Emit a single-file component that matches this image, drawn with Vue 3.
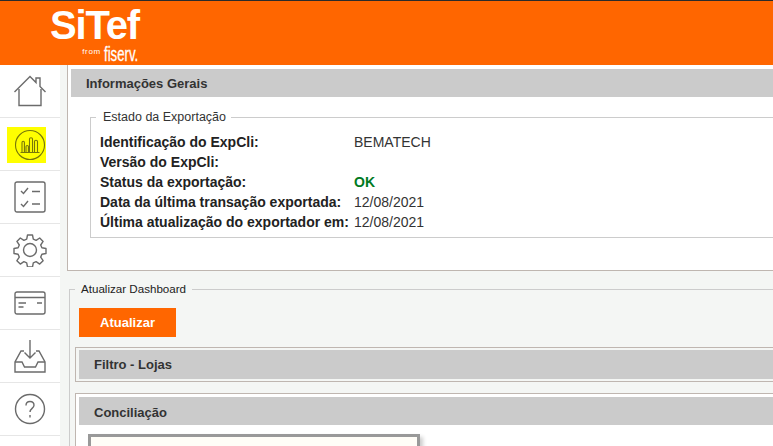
<script setup>
const sideItems = ['home', 'chart', 'tasks', 'gear', 'card', 'inbox', 'help']
const rows = [
  { label: 'Identificação do ExpCli:', value: 'BEMATECH' },
  { label: 'Versão do ExpCli:', value: '' },
  { label: 'Status da exportação:', value: 'OK', ok: true },
  { label: 'Data da última transação exportada:', value: '12/08/2021' },
  { label: 'Última atualização do exportador em:', value: '12/08/2021' },
]
</script>

<template>
  <div class="page">
    <header class="topbar">
      <div class="logo">
        <div class="logo-name">SiTef</div>
        <div class="logo-sub"><span class="from">from</span><span class="fiserv">fiserv.</span></div>
      </div>
    </header>
    <div class="body">
      <nav class="sidebar">
        <div v-for="item in sideItems" :key="item" class="side-item">
          <svg v-if="item === 'home'" width="34" height="34" viewBox="0 0 34 34" fill="none" stroke="#6b6b6b" stroke-width="1.4">
            <path d="M1.500 18 17 2.500 23 8.500V4h4v8.500l5.500 5.500" />
            <path d="M6 15v16.500h22V15" />
          </svg>
          <span v-else-if="item === 'chart'" class="marker">
            <svg width="32" height="32" viewBox="0 0 32 32" fill="none" stroke="#77770a" stroke-width="1.100">
              <circle cx="16" cy="16" r="14.500" />
              <path d="M6.500 23.500h19M8 23v-9.500c0-1.600 2.400-1.600 2.400 0V23M12 23v-5.500c0-1.400 2.400-1.400 2.400 0V23M15.500 23V10c0-1.600 3-1.600 3 0v13M20.500 23v-10.500c0-1.600 3-1.600 3 0V23" />
            </svg>
          </span>
          <svg v-else-if="item === 'tasks'" width="32" height="32" viewBox="0 0 32 32" fill="none" stroke="#6b6b6b" stroke-width="1.400">
            <rect x="1" y="1" width="30" height="30" rx="2" />
            <path d="M7 10l2.500 2.500L14 7M18 10.500h8M7 23l2.500 2.500L14 20M18 23h8" />
          </svg>
          <svg v-else-if="item === 'gear'" width="34" height="34" viewBox="0 0 34 34" fill="none" stroke="#6b6b6b" stroke-width="1.400" stroke-linejoin="round">
            <circle cx="17" cy="17" r="6.500" />
            <path d="M14.500 2h5l.8 4.200 2.800 1.200 3.600-2.400 3.400 3.400-2.400 3.600 1.200 2.800 4.100.7v5l-4.100.8-1.200 2.800 2.400 3.600-3.400 3.400-3.600-2.400-2.800 1.200-.8 4.100h-5l-.8-4.100-2.800-1.200-3.600 2.400-3.400-3.400 2.400-3.600-1.200-2.800-4.100-.8v-5l4.100-.7 1.200-2.800-2.400-3.600 3.400-3.400 3.600 2.400 2.800-1.200z" />
          </svg>
          <svg v-else-if="item === 'card'" width="32" height="24" viewBox="0 0 32 24" fill="none" stroke="#6b6b6b" stroke-width="1.400">
            <rect x="1" y="1" width="30" height="22" rx="2" />
            <path d="M1 6.500h30M4.500 12h7.500M4.500 16h5M23 12h5" />
          </svg>
          <svg v-else-if="item === 'inbox'" width="32" height="34" viewBox="0 0 32 34" fill="none" stroke="#6b6b6b" stroke-width="1.400">
            <path d="M16 1v18M10.500 13.500 16 19l5.500-5.500" />
            <path d="M10 12H7L1 23v10h30V23L25 12h-3" />
            <path d="M1 23h7l2.500 5h11l2.500-5h7" />
          </svg>
          <svg v-else width="32" height="32" viewBox="0 0 32 32" fill="none" stroke="#6b6b6b" stroke-width="1.400">
            <circle cx="16" cy="16" r="14.500" />
            <path d="M12 12.500c0-2.500 1.800-4 4-4s4 1.500 4 3.800c0 3-4 3.200-4 6.700" />
            <path d="M16 22v2.500" />
          </svg>
        </div>
      </nav>
      <main class="content">
        <section class="panel">
          <h2 class="panel-title main-title">Informações Gerais</h2>
          <fieldset class="status-box">
            <legend>Estado da Exportação</legend>
            <div class="status-grid">
              <template v-for="row in rows" :key="row.label">
                <span class="label">{{ row.label }}</span>
                <span class="value" :class="{ ok: row.ok }">{{ row.value }}</span>
              </template>
            </div>
          </fieldset>
        </section>
        <fieldset class="dash-box">
          <legend>Atualizar Dashboard</legend>
          <button class="update-btn">Atualizar</button>
          <section class="sub-panel">
            <h2 class="panel-title">Filtro - Lojas</h2>
          </section>
          <section class="sub-panel last">
            <h2 class="panel-title">Conciliação</h2>
            <div class="sub-body"><div class="chart-box"></div></div>
          </section>
        </fieldset>
      </main>
    </div>
  </div>
</template>

<style>
html, body {
  margin: 0;
  height: 100%;
  overflow: hidden;
  background: #f4f6f4;
}
</style>

<style scoped>
.page {
  width: 773px;
  height: 446px;
  overflow: hidden;
  font-family: "Liberation Sans", Arial, sans-serif;
  background: #f4f6f4;
}
.topbar {
  height: 64px;
  background: #ff6600;
  border-top: 1px solid #2b2b2b;
  padding-left: 50px;
  overflow: hidden;
}
.logo {
  width: 90px;
  color: #fff;
}
.logo-name {
  font-size: 40px;
  line-height: 38px;
  font-weight: 700;
  letter-spacing: -1.200px;
  margin-top: 5px;
}
.logo-sub {
  display: flex;
  justify-content: flex-end;
  align-items: baseline;
  line-height: 18px;
  height: 19px;
  margin-top: 1px;
}
.from {
  align-self: flex-start;
  font-size: 8px;
  letter-spacing: 0.7px;
  line-height: 12px;
  margin-top: 1px;
  margin-right: 3px;
}
.fiserv {
  width: 36px;
  font-size: 20px;
  white-space: nowrap;
  transform: scaleX(0.66);
  transform-origin: left;
  -webkit-text-stroke: 0.3px #fff;
}
.body {
  display: flex;
}
.sidebar {
  width: 60px;
  flex: none;
  background: #fff;
  height: 381px;
}
.side-item {
  height: 52px;
  border-bottom: 1px solid #e6e6e6;
  display: flex;
  align-items: center;
  justify-content: center;
}
.marker {
  display: flex;
  background: #ffff00;
  width: 39px;
  height: 36px;
  margin-right: 7px;
  margin-top: 1px;
  align-items: center;
  justify-content: flex-end;
}
.content {
  flex: 1;
  min-width: 0;
  padding-left: 7px;
}
.panel {
  height: 206px;
  background: #fff;
  border: 1px solid #bfb6b0;
  border-width: 0 0 1px 1px;
  padding: 4px 0 0 3px;
  box-sizing: border-box;
  width: 720px;
}
.panel-title {
  margin: 0;
  background: #cbcbcb;
  font-size: 13px;
  font-weight: 700;
  color: #333;
  height: 28px;
  line-height: 28px;
  padding-left: 15px;
}
.main-title {
  line-height: 30px;
}
.status-box {
  margin: 13px 0 0 19px;
  padding: 8px 0 5px 9px;
  border: 1px solid #cccccc;
  border-right: 0;
  min-width: 0;
}
.status-box legend {
  font-size: 12.500px;
  color: #333;
  margin-left: -4px;
  padding: 0 5px 0 7px;
  line-height: 14px;
}
.status-grid {
  display: grid;
  grid-template-columns: 254px 1fr;
  grid-auto-rows: 20px;
  align-items: center;
  font-size: 14px;
  color: #222;
}
.label {
  font-weight: 700;
}
.value {
  color: #333;
}
.ok {
  color: #007a1f;
  font-weight: 700;
}
.dash-box {
  margin: 11px 0 0 2px;
  padding: 12px 0 0 5px;
  border: 1px solid #cccccc;
  border-right: 0;
  border-bottom: 0;
  min-width: 0;
  width: 720px;
  box-sizing: border-box;
}
.dash-box legend {
  font-size: 11.600px;
  color: #222;
  margin-left: 0;
  padding: 0 6px 0 6px;
  line-height: 14px;
}
.update-btn {
  display: block;
  width: 97px;
  height: 29px;
  margin-left: 4px;
  border: none;
  background: #ff6600;
  color: #fff;
  font-family: inherit;
  font-size: 13px;
  font-weight: 700;
}
.sub-panel {
  margin-top: 10px;
  border: 1px solid #bfb6b0;
  border-right: 0;
  padding: 2px 0 2px 3px;
}
.sub-panel .panel-title {
  height: 29px;
  line-height: 30px;
  padding-left: 15px;
}
.sub-panel.last {
  margin-top: 11px;
  padding: 3px 0 0 3px;
  background: #fff;
}
.sub-panel.last .panel-title {
  height: 28px;
  line-height: 31px;
}
.sub-body {
  padding: 9px 0 0 9px;
}
.chart-box {
  width: 326px;
  height: 60px;
  background: #fffdf7;
  border: 3px solid #999;
  box-shadow: 3px 3px 4px rgba(0, 0, 0, 0.2);
}
</style>
